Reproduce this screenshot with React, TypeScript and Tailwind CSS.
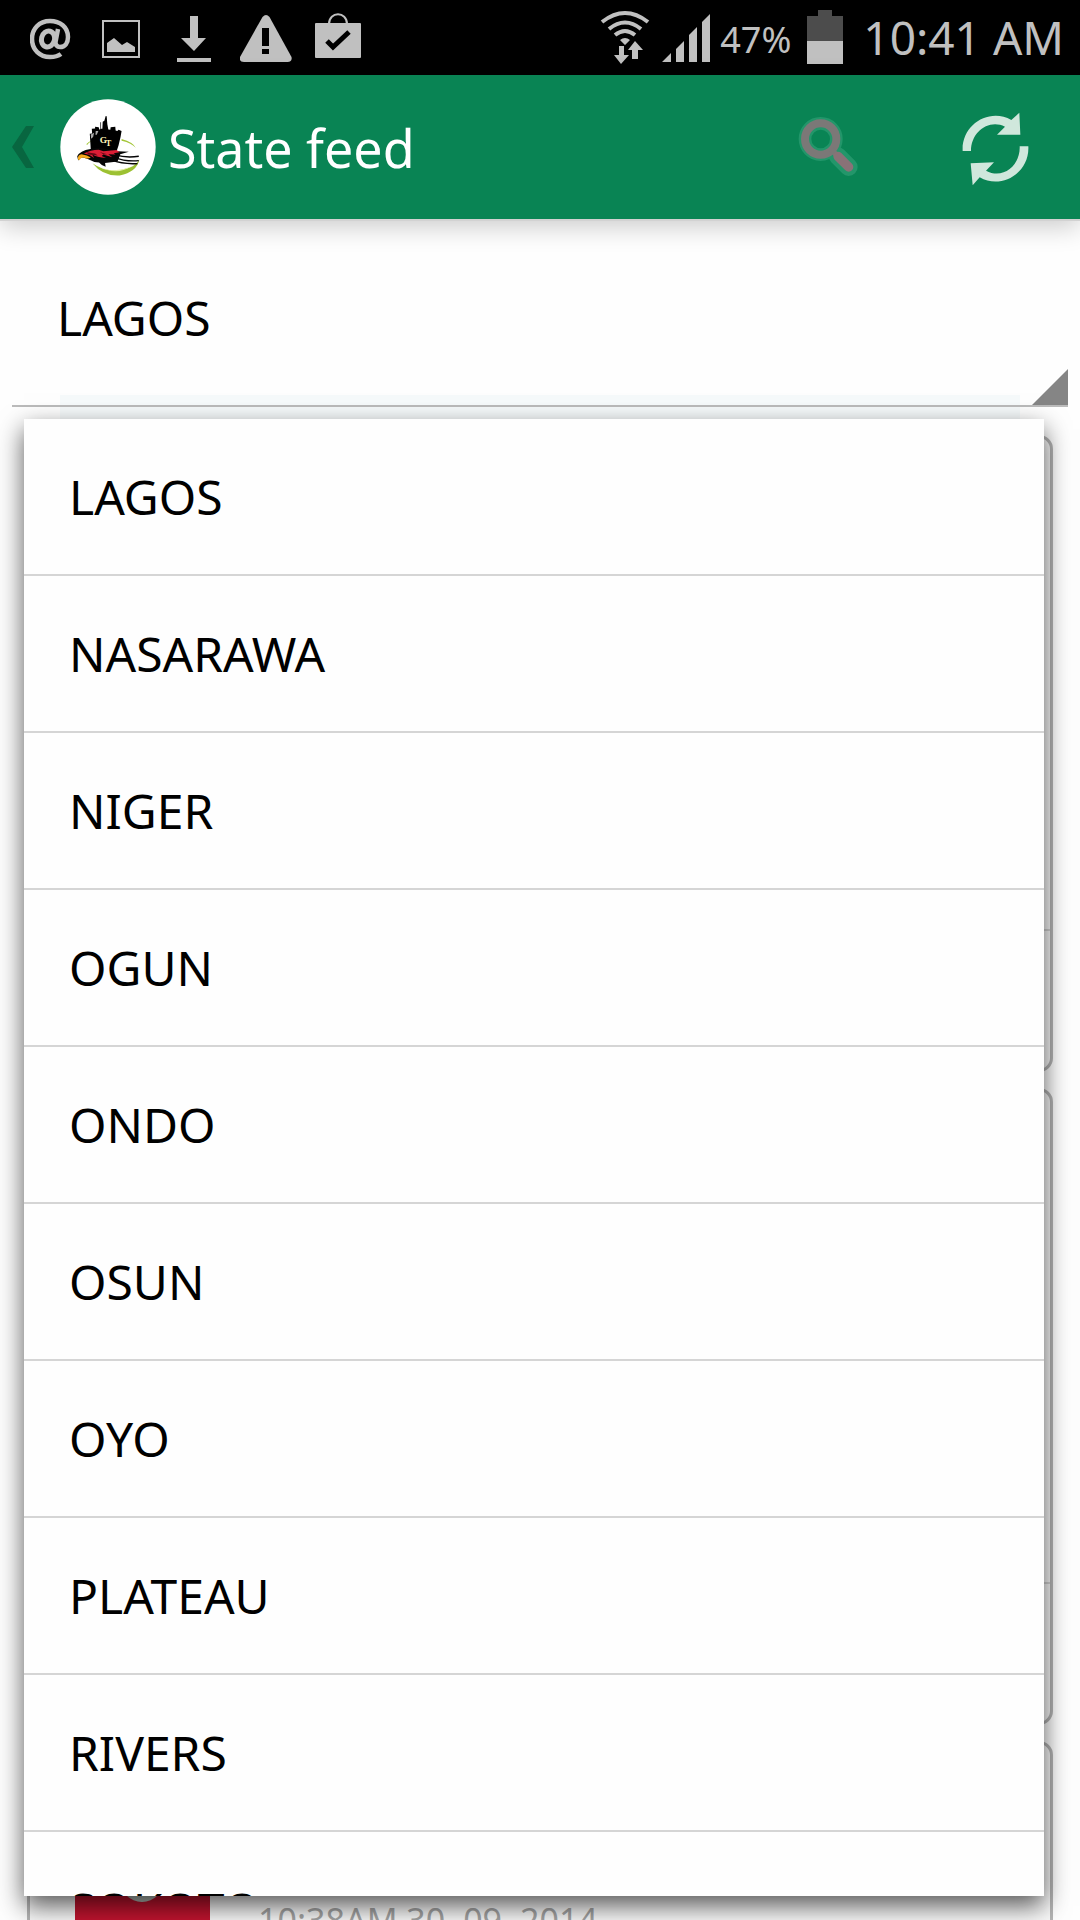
import { useState } from "react";

const states = [
  "LAGOS",
  "NASARAWA",
  "NIGER",
  "OGUN",
  "ONDO",
  "OSUN",
  "OYO",
  "PLATEAU",
  "RIVERS",
  "SOKOTO",
];

const StatusBar = () => (
  <div className="flex h-[75px] shrink-0 items-center justify-between bg-black pl-[30px] pr-4 text-[#c0c0c0]">
    <div className="flex items-center gap-7">
      <svg width="42" height="75" viewBox="0 0 42 75" fill="none" stroke="currentColor" strokeWidth="4">
        <ellipse cx="18" cy="39" rx="6.500" ry="8" strokeWidth="5" transform="rotate(15 18 39)" />
        <path d="M28 29 L25.500 42 Q25.500 47 30 47 C35 47 38 43 38 37 C38 27 30 21 20 21 C9 21 2 29 2 39 C2 50 10 57 20 57 Q27 57 31 54" strokeWidth="4.500" />
      </svg>
      <svg width="38" height="75" viewBox="0 0 38 75" fill="currentColor" className="ml-0.5">
        <path d="M0 20h38v38H0z M2 22v34h34V22z" fillRule="evenodd" />
        <path d="M5 52v-9l7-5 8 7 5-3 8 5v5z" />
      </svg>
      <svg width="36" height="75" viewBox="0 0 36 75" fill="currentColor" className="ml-2">
        <path d="M14 16h8v22h8L18 51 5 38h9z M1 58h34v4H1z" />
      </svg>
      <svg width="52" height="75" viewBox="0 0 52 75">
        <path d="M22.500 17q3.500-4 7 0l22 40q1 5-4 5H4q-5 0-4-5z" fill="currentColor" />
        <path d="M22 28h7v18h-7z M22 49h7v5h-7z" fill="#000" />
      </svg>
      <svg width="48" height="75" viewBox="0 0 48 75" className="-ml-1.5">
        <path d="M15 24c0-13 18-13 18 0" fill="none" stroke="currentColor" strokeWidth="2" />
        <rect x="1" y="23" width="46" height="35" rx="1" fill="currentColor" />
        <path d="M13 41l6 6 16-15" fill="none" stroke="#000" strokeWidth="5" />
      </svg>
    </div>
    <div className="flex items-center">
      <svg width="50" height="75" viewBox="0 0 50 75" fill="none" stroke="currentColor">
        <path d="M2 22q23-18 46 0M9 29q16-13 32 0M15 35q10-8 20 0" strokeWidth="4" />
        <path
          d="M20 40q5-4 10 0l-5 5z M19 46h5v9h5l-8 9-7-9h5z M32 59h6V50h5l-8-9-7 9h4z"
          fill="currentColor"
          stroke="none"
        />
      </svg>
      <svg width="48" height="75" viewBox="0 0 48 75" fill="currentColor" className="ml-3">
        <path d="M0 62l9-9v9z M14 62V49l8-8v21z M27 62V35l8-8v35z M40 62V22l8-8v48z" />
      </svg>
      <span className="ml-2.5 pt-1 text-4xl">47%</span>
      <svg width="36" height="75" viewBox="0 0 36 75" className="ml-4">
        <path d="M11 10h14v6h11v26H0V16h11z" fill="#4c4c4c" />
        <path d="M0 41h36v23H0z" fill="currentColor" />
      </svg>
      <span className="ml-5 text-[46px]">10:41 AM</span>
    </div>
  </div>
);

const Logo = () => (
  <svg width="96" height="96" viewBox="14 11 290 290">
    <circle cx="159" cy="156" r="144" fill="#fff" />
    <path d="M93 148q8-10 20-12-12 6-16 13z M200 132q36 10 43 27-12-15-43-22z" fill="#a4c639" />
    <path d="M112 205q50 36 113 13 18-6 29-24-8 38-60 48-50 3-82-37z" fill="#9cc132" />
    <path d="M130 214q46 24 98 2-46 28-98-2z" fill="#e6f0a8" />
    <path d="M107 164l-3-48 7-1-1-14 10-1v-5l11 1 2 8 3-2V81h2v20h4l1-21 5-3 4-15 3 1 2 24 3 16 6 1 1-8 14-1 1 11 5 2 4-4 9 4-3 17-6 26-6 18z" fill="#000" />
    <path d="M107 118l10-5-3 13-6 5z M122 108h8l-5 11h-4z" fill="#aaa" />
    <path d="M66 184q8-17 40-22 40-8 66 6l50 2-26 8-8 22-38 4 2 12q-14-5-20-13l-14-2-20-9-14-4q-9-1-15 9z" fill="#050505" />
    <path
      d="M180 180q35 10 72 4M178 187q35 14 74 10M168 195q39 14 80 11"
      fill="none"
      stroke="#050505"
      strokeWidth="4"
    />
    <path d="M86 176q20-12 45-12l14 5 40-4 9 7-18 3 6 4-22-1 12 9-27-8-5 4 13 6q-28-1-42-10l6 10-14-9z" fill="#dc1d35" />
    <path d="M94 172l26 4 8 6-28-3z M134 171l22 7-10 1z" fill="#650915" />
    <path d="M68 193q-1-13 11-15l16 4 12 6q-9 5-17 1-14-4-18 7z" fill="#f5a91b" />
    <text x="134" y="145" fill="#fff6ba" fontFamily="Liberation Serif" fontSize="28" fontWeight="bold">
      G
    </text>
    <text x="152" y="153" fill="#fff6ba" fontFamily="Liberation Serif" fontSize="25" fontWeight="bold">
      T
    </text>
  </svg>
);

const Header = () => (
  <header className="relative z-10 flex h-36 shrink-0 items-center justify-between bg-[#098454] pl-3 pr-[50px] shadow-[0_2px_0_#d2d2d2,0_8px_24px_rgba(0,0,0,0.2)]">
    <a href="#back" className="flex items-center text-white">
      <svg width="22" height="44" viewBox="0 0 22 44">
        <path d="M0 22L14 1h8L10 22l12 21h-8z" fill="#086640" />
      </svg>
      <span className="ml-[26px]">
        <Logo />
      </span>
      <h1 className="ml-3 pt-0.5 text-[52px]">State feed</h1>
    </a>
    <div className="flex items-center gap-[102px]">
      <button aria-label="Search">
        <svg width="62" height="62" viewBox="0 0 186 186" fill="none">
          <g stroke="#23966a" strokeLinecap="round">
            <circle cx="68" cy="69" r="47" strokeWidth="38" />
            <path d="M119 120l33 33" strokeWidth="54" />
          </g>
          <circle cx="68" cy="69" r="47" stroke="#7b7877" strokeWidth="24" />
          <path d="M100 101l14 14" stroke="#7b7877" strokeWidth="16" />
          <path d="M120 121l32 32" stroke="#897277" strokeWidth="28" strokeLinecap="round" />
        </svg>
      </button>
      <button aria-label="Refresh" className="pt-1">
        <svg width="68" height="74" viewBox="0 0 204 222" fill="#d0e7dc">
          <path d="M2 117C-2 38 82-14 148 24L172 2l3 66h-70l24-24C80 20 27 60 27 117z" />
          <path d="M199 103c4 79-80 131-146 93l-21 24-6-66 70-3-24 25c52 28 104-17 101-73z" />
        </svg>
      </button>
    </div>
  </header>
);

const FeedCard = ({ time }: { time?: string }) => (
  <article className="flex h-[637px] shrink-0 flex-col rounded-[14px] border-[3px] border-[#b5b5b5] bg-[#fafafa]">
    <div className="flex h-[493px] gap-12 border-b-2 border-[#d5d5d5] px-[45px] pt-[45px]">
      {time && (
        <>
          <svg width="135" height="135" viewBox="0 0 135 135">
            <path d="M0 0h135v135H0z" fill="#c2142f" />
            <circle cx="67" cy="91" r="22" fill="#b9c2bc" />
          </svg>
          <p className="pt-[106px] text-[34px] text-[#a5a5a5]">{time}</p>
        </>
      )}
    </div>
  </article>
);

const App = () => {
  const [selected, setSelected] = useState("LAGOS");
  const [open, setOpen] = useState(true);

  const pickState = (name: string) => {
    setSelected(name);
    setOpen(false);
  };

  return (
    <div className="flex h-screen flex-col overflow-hidden bg-[#fefefe] font-['Noto_Sans',sans-serif] text-black">
      <StatusBar />
      <Header />
      <main className="relative flex min-h-0 flex-1 flex-col overflow-hidden">
        <div className="relative mx-3 flex h-[188px] shrink-0 border-b-2 border-[#bbbbbb]">
          <select
            aria-label="State"
            className="w-full appearance-none px-[45px] pt-3 text-5xl outline-none"
            value={selected}
            onMouseDown={(e) => {
              e.preventDefault();
              setOpen(!open);
            }}
            onChange={(e) => setSelected(e.target.value)}
          >
            {states.map((name) => (
              <option key={name}>{name}</option>
            ))}
          </select>
          <svg width="36" height="36" viewBox="0 0 36 36" className="pointer-events-none absolute right-0 bottom-0">
            <path d="M36 0v36H0z" fill="#858585" />
          </svg>
        </div>
        <div className="mx-[60px] -mt-3 h-6 shrink-0 bg-[#f6fafb]"></div>
        <div className="mx-[27px] mt-4 flex flex-col gap-4">
          <FeedCard />
          <FeedCard />
          <FeedCard time="10:38AM 30, 09, 2014" />
        </div>

        {open && (
          <ul className="absolute top-[200px] right-9 bottom-6 left-6 overflow-y-auto bg-[#fefefe] shadow-[0_10px_24px_rgba(0,0,0,0.65)] [scrollbar-width:none]">
            {states.map((name) => (
              <li key={name} className="border-b-2 border-[#d5d5d5]">
                <button className="flex h-[155px] w-full items-center px-[45px] text-5xl" onClick={() => pickState(name)}>
                  {name}
                </button>
              </li>
            ))}
          </ul>
        )}
      </main>
    </div>
  );
};

export default App;
